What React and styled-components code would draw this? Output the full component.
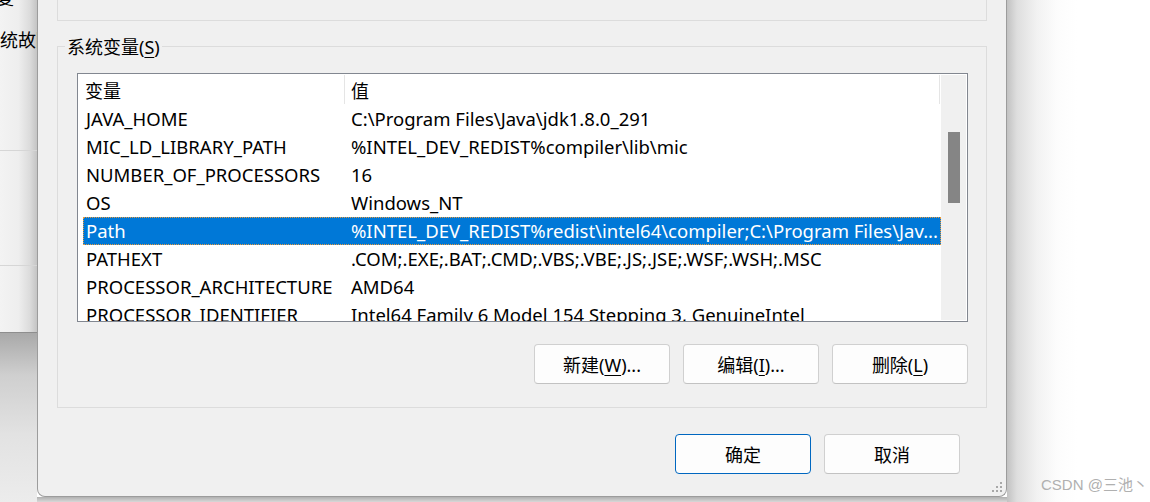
import React from "react";
import styled, { createGlobalStyle, css } from "styled-components";

const GlobalStyle = createGlobalStyle`
  html, body { margin: 0; padding: 0; }
  body {
    font-family: "Noto Sans", "Noto Sans CJK SC", sans-serif;
    font-size: 18px;
    color: #000;
    background: #fff;
  }
`;

const Page = styled.div`
  display: flex;
  width: 1150px;
  height: 502px;
  overflow: hidden;
`;

const LeftBackdrop = styled.div`
  width: 37px;
  flex-shrink: 0;
  display: flex;
  flex-direction: column;
`;

const BehindWindow = styled.div`
  height: 333px;
  box-sizing: border-box;
  border-bottom: 1px solid #8e8e8e;
  overflow: hidden;
  white-space: nowrap;
  line-height: 24px;
  background: linear-gradient(to right, #f3f3f3 0, #eeeeee 50%, #dcdcdc 80%, #c4c4c4 100%);
`;

const BehindText = styled.div`
  margin-top: ${(p) => p.$top}px;
  margin-left: ${(p) => p.$left || 0}px;
`;

const BehindRule = styled.div`
  height: 1px;
  background: #d6d6d6;
  margin-top: ${(p) => p.$top}px;
`;

const DesktopShade = styled.div`
  flex: 1;
  background: linear-gradient(to bottom, #a9a9a9 0, #cfcfcf 25%, #e2e2e2 60%, #ececec 100%);
`;

const DialogColumn = styled.div`
  width: 970px;
  flex-shrink: 0;
  display: flex;
  flex-direction: column;
`;

const Dialog = styled.div`
  position: relative;
  height: 497px;
  box-sizing: border-box;
  border: 1px solid #9c9c9c;
  border-top: none;
  border-radius: 0 0 8px 8px;
  background: #f0f0f0;
  padding: 0 19px;
  display: flex;
  flex-direction: column;
`;

const BottomShade = styled.div`
  flex: 1;
  background: linear-gradient(to bottom, #b0b0b0, #d8d8d8);
`;

const RightBackdrop = styled.div`
  flex: 1;
  display: flex;
  flex-direction: column;
  justify-content: flex-end;
  background: linear-gradient(to right, #c2c2c2 0, #dedede 10px, #f2f2f2 30px, #fcfcfc 50px, #ffffff 70px);
`;

const Watermark = styled.div`
  font-family: "Liberation Sans", "Noto Sans CJK SC", sans-serif;
  font-size: 15px;
  line-height: 18px;
  color: #b0b0b0;
  padding-left: 34px;
  margin-bottom: 8px;
  white-space: nowrap;
`;

const GroupTail = styled.div`
  height: 21px;
  box-sizing: border-box;
  border: 1px solid #dcdcdc;
  border-top: none;
`;

const GroupBox = styled.div`
  position: relative;
  margin-top: 25px;
  border: 1px solid #dcdcdc;
  padding: 26px 18px 23px 19px;
`;

const GroupLabel = styled.div`
  position: absolute;
  top: -12px;
  left: 7px;
  padding: 0 2px;
  line-height: 24px;
  background: #f0f0f0;
`;

const Mnemonic = styled.span`
  text-decoration: underline;
  text-underline-offset: 3px;
  text-decoration-thickness: 1px;
`;

const ListView = styled.div`
  height: 249px;
  box-sizing: border-box;
  border: 1px solid #828790;
  background: #fff;
  display: flex;
`;

const ListMain = styled.div`
  flex: 1;
  min-width: 0;
  display: flex;
  flex-direction: column;
`;

const Header = styled.div`
  height: 31px;
  flex-shrink: 0;
  display: flex;
  margin-right: 1px;
`;

const HeaderCell = styled.div`
  position: relative;
  box-sizing: border-box;
  display: flex;
  align-items: center;
  padding-left: ${(p) => p.$pad}px;
  ${(p) => (p.$width ? css`width: ${p.$width}px;` : css`flex: 1;`)}
  &::after {
    content: "";
    position: absolute;
    right: 0;
    top: 1px;
    bottom: 1px;
    width: 1px;
    background: #e5e5e5;
  }
`;

const Rows = styled.div`
  flex: 1;
  overflow: hidden;
  font-size: 18.5px;
`;

const Row = styled.div`
  height: 28px;
  margin-left: 5px;
  padding-bottom: 1px;
  box-sizing: border-box;
  display: flex;
  align-items: center;
  white-space: nowrap;
  ${(p) =>
    p.$selected &&
    css`
      background: #0078d7;
      color: #fff;
      outline: 1px dotted #e89a3c;
      outline-offset: -1px;
    `}
`;

const NameCell = styled.div`
  width: 262px;
  flex-shrink: 0;
  box-sizing: border-box;
  padding-left: 3px;
  overflow: hidden;
`;

const ValueCell = styled.div`
  flex: 1;
  min-width: 0;
  padding-left: 6px;
  padding-right: 2px;
  overflow: hidden;
  text-overflow: ellipsis;
`;

const ScrollTrack = styled.div`
  width: 25px;
  flex-shrink: 0;
  margin: 1px 1px 1px 0;
  background: #f0f0f0;
`;

const ScrollThumb = styled.div`
  width: 12px;
  height: ${(p) => p.$height}px;
  margin-left: 7px;
  margin-top: ${(p) => p.$top}px;
  background: #858585;
`;

const ButtonRow = styled.div`
  display: flex;
  justify-content: flex-end;
  gap: 13px;
  margin-top: ${(p) => p.$top}px;
  padding-right: ${(p) => p.$right || 0}px;
`;

const Button = styled.button`
  width: 136px;
  height: 40px;
  box-sizing: border-box;
  border: 1px solid #d0d0d0;
  border-bottom-color: #c2c2c2;
  border-radius: 4px;
  background: #fdfdfd;
  font: inherit;
  font-size: 18px;
  color: #000;
  padding: 0;
  ${(p) =>
    p.$primary &&
    css`
      border-color: #0067c0;
    `}
`;

const Grip = styled.svg`
  position: absolute;
  right: 2px;
  bottom: 2px;
`;

const rows = [
  ["JAVA_HOME", "C:\\Program Files\\Java\\jdk1.8.0_291"],
  ["MIC_LD_LIBRARY_PATH", "%INTEL_DEV_REDIST%compiler\\lib\\mic"],
  ["NUMBER_OF_PROCESSORS", "16"],
  ["OS", "Windows_NT"],
  ["Path", "%INTEL_DEV_REDIST%redist\\intel64\\compiler;C:\\Program Files\\Jav...", true],
  ["PATHEXT", ".COM;.EXE;.BAT;.CMD;.VBS;.VBE;.JS;.JSE;.WSF;.WSH;.MSC"],
  ["PROCESSOR_ARCHITECTURE", "AMD64"],
  ["PROCESSOR_IDENTIFIER", "Intel64 Family 6 Model 154 Stepping 3, GenuineIntel"],
];

export default function App() {
  return (
    <>
      <GlobalStyle />
      <Page>
        <LeftBackdrop>
          <BehindWindow>
            <BehindText $top={-14} $left={-4}>复</BehindText>
            <BehindText $top={18}>统故障和调试信息</BehindText>
            <BehindRule $top={98} />
            <BehindRule $top={114} />
          </BehindWindow>
          <DesktopShade />
        </LeftBackdrop>

        <DialogColumn>
          <Dialog>
            <GroupTail />
            <GroupBox>
              <GroupLabel>
                系统变量(<Mnemonic>S</Mnemonic>)
              </GroupLabel>
              <ListView>
                <ListMain>
                  <Header>
                    <HeaderCell $width={267} $pad={7}>变量</HeaderCell>
                    <HeaderCell $pad={6}>值</HeaderCell>
                  </Header>
                  <Rows>
                    {rows.map(([name, value, sel]) => (
                      <Row key={name} $selected={sel}>
                        <NameCell>{name}</NameCell>
                        <ValueCell>{value}</ValueCell>
                      </Row>
                    ))}
                  </Rows>
                </ListMain>
                <ScrollTrack>
                  <ScrollThumb $top={57} $height={71} />
                </ScrollTrack>
              </ListView>
              <ButtonRow $top={22}>
                <Button>
                  新建(<Mnemonic>W</Mnemonic>)...
                </Button>
                <Button>
                  编辑(<Mnemonic>I</Mnemonic>)...
                </Button>
                <Button>
                  删除(<Mnemonic>L</Mnemonic>)
                </Button>
              </ButtonRow>
            </GroupBox>
            <ButtonRow $top={26} $right={27}>
              <Button $primary>确定</Button>
              <Button>取消</Button>
            </ButtonRow>
            <Grip width="12" height="12" viewBox="0 0 12 12">
              <g fill="#a8a8a8">
                <rect x="8" y="0" width="2" height="2" />
                <rect x="4" y="4" width="2" height="2" />
                <rect x="8" y="4" width="2" height="2" />
                <rect x="0" y="8" width="2" height="2" />
                <rect x="4" y="8" width="2" height="2" />
                <rect x="8" y="8" width="2" height="2" />
              </g>
            </Grip>
          </Dialog>
          <BottomShade />
        </DialogColumn>

        <RightBackdrop>
          <Watermark>CSDN @三池丶</Watermark>
        </RightBackdrop>
      </Page>
    </>
  );
}
